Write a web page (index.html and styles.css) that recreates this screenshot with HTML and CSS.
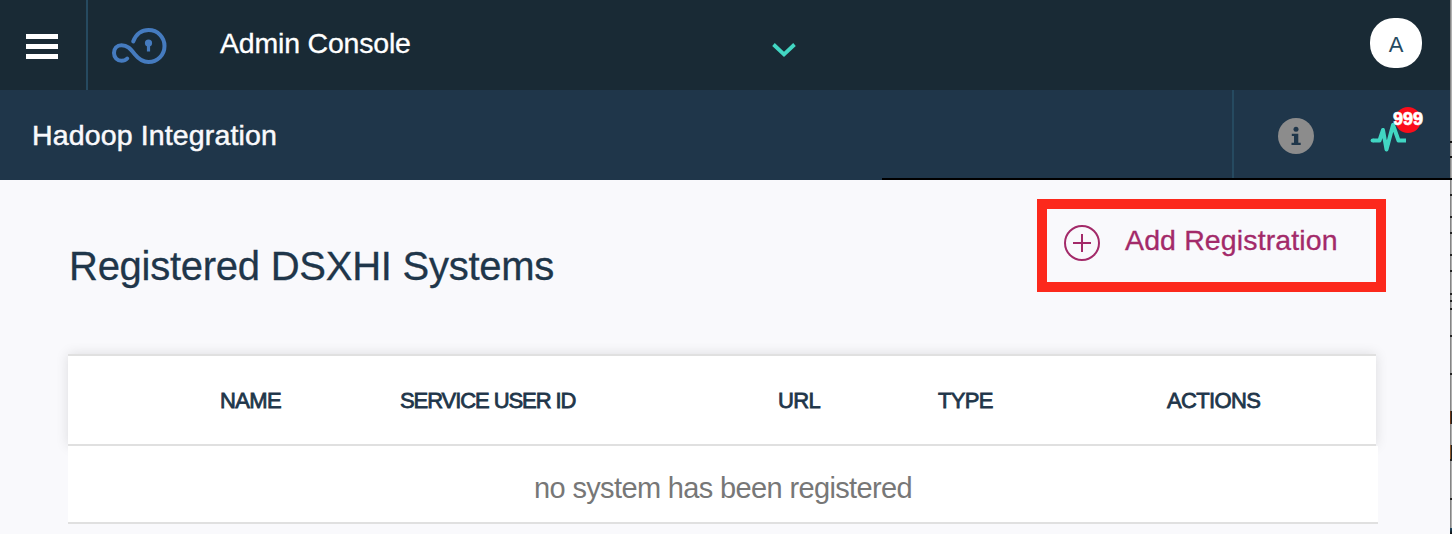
FILE: index.html
```html
<!DOCTYPE html>
<html lang="en">
<head>
<meta charset="utf-8">
<title>Admin Console</title>
<link rel="stylesheet" href="styles.css">
</head>
<body>
<div class="window">
  <div class="app">
    <header class="topbar">
      <button class="menu" aria-label="Menu"><span></span><span></span><span></span></button>
      <svg class="logo" viewBox="0 0 60 42" width="60" height="42" fill="none" stroke="#457bbf" stroke-width="4" stroke-linecap="round">
        <path d="M23.2 15.5C26 8 32 4 38.5 4C48 4 54.5 11.500 54.500 20C54.500 29 47.500 36 38.500 36C32.500 36 29 33.500 25 28.500C20.500 23 17.500 19.200 11.500 19.200C7 19.200 4 22.500 4 27C4 31.500 7.300 34.700 11.500 34.700C14 34.700 15.800 34 17.200 32.500"/>
        <circle cx="38.500" cy="17" r="3.600" fill="#457bbf" stroke="none"/>
        <path d="M38.500 17V25.500" stroke-width="3.200" stroke-linecap="butt"/>
      </svg>
      <div class="product">Admin Console</div>
      <svg class="chevron" viewBox="0 0 24 14" width="24" height="14" fill="none" stroke="#42d6c3" stroke-width="3.800"><path d="M1.500 1.500L12 11.300L22.500 1.500"/></svg>
      <div class="avatar">A</div>
    </header>
    <div class="subbar">
      <h1 class="section">Hadoop Integration</h1>
      <div class="tools">
        <svg class="info" viewBox="0 0 36 36" width="36" height="36">
          <circle cx="18" cy="18" r="18" fill="#8c8c8c"/>
          <circle cx="18" cy="11.300" r="2.500" fill="#1f364a"/>
          <path fill="#1f364a" d="M13.800 15.700H20.300V24.800H22.700V27H13.500V24.800H16V18H13.800Z"/>
        </svg>
        <div class="activity">
          <svg viewBox="0 0 38 30" width="38" height="30" fill="none" stroke="#41d6c3" stroke-width="4" stroke-linejoin="round"><path d="M3 17.500H9.500L13 7L16.500 26.500L23 2L28.500 17.500H36"/><circle cx="2.600" cy="17.500" r="2" fill="#41d6c3" stroke="none"/></svg>
          <span class="badge">999</span>
        </div>
      </div>
    </div>
    <main class="content">
      <div class="heading">
        <h2 class="title">Registered DSXHI Systems</h2>
        <button class="add">
          <svg viewBox="0 0 36 36" width="36" height="36" fill="none" stroke="#a32a69" stroke-width="2"><circle cx="18" cy="18" r="17"/><path d="M9 18H27M18 9V27"/></svg>
          <span>Add Registration</span>
        </button>
      </div>
      <section class="table">
        <div class="thead"><span></span><span>NAME</span><span class="c-user">SERVICE USER ID</span><span>URL</span><span>TYPE</span><span>ACTIONS</span></div>
        <div class="empty">no system has been registered</div>
      </section>
    </main>
  </div>
  <div class="edge"></div>
  <div class="underline"></div>
</div>
</body>
</html>
```

FILE: styles.css
```css
* { box-sizing: border-box; }
body { margin: 0; font-family: "Liberation Sans", Arial, sans-serif; }
button { border: 0; margin: 0; background: none; font: inherit; }
h1, h2 { margin: 0; font-weight: 400; }
svg { display: block; flex: none; }

.window { position: relative; display: flex; width: 1452px; height: 534px; overflow: hidden; }
.app { width: 1450px; background: #f9f9fc; }
.edge {
  width: 2px;
  background:
    linear-gradient(#111, #111) 0 141px / 2px 2px no-repeat,
    linear-gradient(#111, #111) 0 156px / 2px 2px no-repeat,
    linear-gradient(#222, #222) 0 194px / 2px 2px no-repeat,
    linear-gradient(#222, #222) 0 216px / 2px 2px no-repeat,
    linear-gradient(#222, #222) 0 232px / 2px 2px no-repeat,
    linear-gradient(#222, #222) 0 254px / 2px 2px no-repeat,
    linear-gradient(#222, #222) 0 270px / 2px 2px no-repeat,
    linear-gradient(#222, #222) 0 293px / 2px 2px no-repeat,
    linear-gradient(#222, #222) 0 300px / 2px 2px no-repeat,
    linear-gradient(#222, #222) 0 308px / 2px 2px no-repeat,
    linear-gradient(#222, #222) 0 335px / 2px 2px no-repeat,
    linear-gradient(#222, #222) 0 373px / 2px 2px no-repeat,
    linear-gradient(90deg, #6b3516 50%, #222 50%) 0 411px / 2px 13px no-repeat,
    linear-gradient(90deg, #89562a 50%, #222 50%) 0 445px / 2px 14px no-repeat,
    linear-gradient(#222, #222) 0 459px / 2px 2px no-repeat,
    linear-gradient(#222, #222) 0 498px / 2px 2px no-repeat,
    linear-gradient(#214a66, #111) 0 528px / 2px 6px no-repeat,
    linear-gradient(90deg, #858585 50%, #b0b0b0 50%);
}
.underline { position: absolute; left: 882px; right: 0; top: 178px; height: 2px; background: #000; }

.topbar { display: flex; align-items: center; height: 90px; background: #192a35; color: #fff; }
.menu {
  display: flex; flex-direction: column; justify-content: center; gap: 5px;
  width: 88px; height: 90px; padding: 3px 28px 0 26px; border-right: 2px solid #264a60;
}
.menu span { height: 5px; background: #fff; }
.logo { margin: 4px 0 0 22px; }
.product { width: 552px; margin-left: 50px; padding-bottom: 3px; font-size: 28.500px; letter-spacing: -0.200px; -webkit-text-stroke: 0.300px; }
.chevron { margin-top: 9px; }
.avatar {
  width: 52px; height: 50px; margin: 0 28px 4px auto; border-radius: 24px;
  background: #fff; color: #264a60; font: 22px/54px "Liberation Sans", sans-serif; text-align: center;
}

.subbar { display: flex; justify-content: space-between; align-items: center; height: 90px; padding-left: 32px; background: #1f364a; color: #f9f9fc; }
.section { font-size: 28.500px; letter-spacing: 0.140px; -webkit-text-stroke: 0.500px; }
.tools { display: flex; align-items: center; width: 218px; height: 90px; padding-left: 44px; border-left: 2px solid #264a60; }
.info { margin-top: 2px; }
.activity { position: relative; margin: 6px 0 0 56px; }
.badge {
  position: absolute; left: 25px; top: -16px; width: 26px; height: 26px; border-radius: 50%;
  display: flex; align-items: center; justify-content: center;
  background: #fb0d1b; color: #fff; font-size: 18px; line-height: 20px; padding-bottom: 2px; font-weight: 700; -webkit-text-stroke: 0.700px;
}

.content { padding: 19px 64px 0 68px; }
.heading { display: flex; justify-content: space-between; height: 155px; }
.title { padding: 44px 0 0 1px; font-size: 40px; line-height: 46px; letter-spacing: -0.260px; color: #1f364a; white-space: nowrap; -webkit-text-stroke: 0.300px; }
.add {
  display: flex; align-items: center; gap: 25px; width: 349px; height: 93px; padding: 0 0 0 17px;
  border: 10px solid #fc291c; color: #a32a69; font-size: 28.500px; letter-spacing: 0.130px; white-space: nowrap; -webkit-text-stroke: 0.300px;
}
.add svg { margin-top: -5px; }
.add span { margin-top: -11px; }

.table { width: 1310px; }
.thead {
  display: grid; grid-template-columns: 152px 180px 378px 160px 229px auto; align-items: center;
  width: 1308px; height: 92px; padding-top: 1px; border-top: 2px solid #e0e0e0; border-bottom: 2px solid #e0e0e0;
  background: #fff; color: #1f364a; font-size: 22px; letter-spacing: -0.650px; white-space: nowrap; -webkit-text-stroke: 0.800px;
  box-shadow: 0 0 12px rgba(0, 0, 0, 0.12);
}
.c-user { letter-spacing: -1.080px; }
.empty {
  position: relative; height: 78px; padding-top: 24px; border-bottom: 2px solid #e0e0e0;
  background: #fff; color: #777; font-size: 29px; letter-spacing: -0.640px; line-height: 36px; text-align: center;
}
```
